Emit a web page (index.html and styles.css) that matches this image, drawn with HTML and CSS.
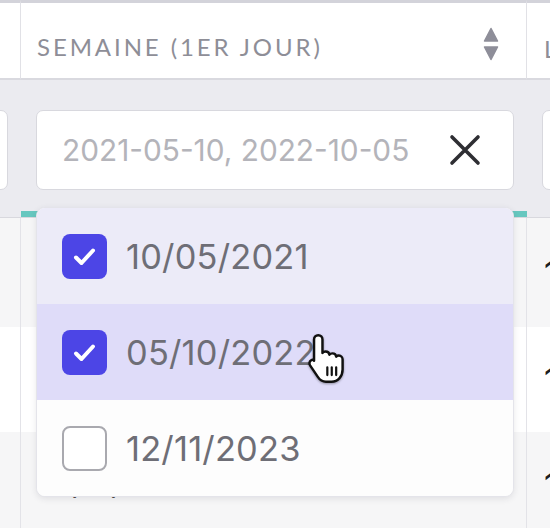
FILE: index.html
```html
<!DOCTYPE html>
<html lang="fr">
<head>
<meta charset="utf-8">
<title>Filtre semaine</title>
<link rel="stylesheet" href="styles.css">
</head>
<body>
<div class="viewport">
  <div class="grid">
    <div class="th c0"></div>
    <div class="th c1">
      <span class="th-label">Semaine (1er jour)</span>
      <svg class="sort" width="16" height="34" viewBox="0 0 16 34"><path d="M8 1.5 L14.5 14 H1.5 Z" fill="#8e8e99" stroke="#8e8e99" stroke-width="1.5" stroke-linejoin="round"/><path d="M8 32.5 L14.5 20 H1.5 Z" fill="#8e8e99" stroke="#8e8e99" stroke-width="1.5" stroke-linejoin="round"/></svg>
    </div>
    <div class="th c2"><span class="th-label">Libellé</span></div>

    <div class="tf c0"><div class="input-box input-stub"></div></div>
    <div class="tf c1">
      <div class="input-box main-input">
        <span class="input-text">2021-05-10, 2022-10-05</span>
        <svg class="clear" width="32" height="32" viewBox="0 0 32 32"><path d="M3 3 L29 29 M29 3 L3 29" stroke="#2e2e33" stroke-width="3.6" stroke-linecap="round"/></svg>
      </div>
      <div class="spacer"></div>
      <div class="focus-bar"></div>
      <div class="dropdown">
        <div class="option selected">
          <span class="checkbox checked"><svg width="45" height="45" viewBox="0 0 45 45"><path d="M14 23.5 L19.5 29 L31 16.5" fill="none" stroke="#fff" stroke-width="4" stroke-linecap="round" stroke-linejoin="round"/></svg></span>
          <span class="opt-label">10/05/2021</span>
        </div>
        <div class="option hover">
          <span class="checkbox checked"><svg width="45" height="45" viewBox="0 0 45 45"><path d="M14 23.5 L19.5 29 L31 16.5" fill="none" stroke="#fff" stroke-width="4" stroke-linecap="round" stroke-linejoin="round"/></svg></span>
          <span class="opt-label">05/10/2022</span>
          <svg class="cursor" width="40" height="52" viewBox="0 0 18 23.5"><path d="M3.6 2.9 C3.6 1.8 4.4 1 5.5 1 C6.6 1 7.4 1.8 7.4 2.9 L7.4 9 C7.7 8.6 8.2 8.4 8.8 8.4 C9.7 8.4 10.4 9 10.5 9.8 C10.8 9.4 11.3 9.2 11.9 9.2 C12.8 9.2 13.5 9.9 13.6 10.7 C13.9 10.4 14.3 10.2 14.8 10.2 C15.8 10.2 16.5 11 16.5 12 L16.5 16.5 C16.5 19.5 14.5 22 11.5 22 L9 22 C7.2 22 6.2 21.2 5.3 19.8 L1.8 14.6 C1.3 13.8 1.5 12.8 2.3 12.3 C2.9 11.9 3.3 12.1 3.6 12.5 Z" fill="#fff" stroke="#111" stroke-width="1.1" stroke-linejoin="round"/><path d="M9.6 15.5 V19 M11.6 15.5 V19 M13.6 15.5 V19" stroke="#111" stroke-width="1" stroke-linecap="round"/></svg>
        </div>
        <div class="option">
          <span class="checkbox"></span>
          <span class="opt-label">12/11/2023</span>
        </div>
      </div>
    </div>
    <div class="tf c2"><div class="input-box input-stub"></div></div>

    <div class="td c0 grey"></div>
    <div class="td c1 grey"><span class="cell-text">10/05/2021</span></div>
    <div class="td c2 grey"><span class="cell-text">128</span></div>

    <div class="td c0"></div>
    <div class="td c1"><span class="cell-text">05/10/2022</span></div>
    <div class="td c2"><span class="cell-text">134</span></div>

    <div class="td c0 grey"></div>
    <div class="td c1 grey"><span class="cell-text">12/11/2023</span></div>
    <div class="td c2 grey"><span class="cell-text">142</span></div>
  </div>
</div>
</body>
</html>
```

FILE: styles.css
```css
html, body {
  margin: 0;
  padding: 0;
  background: #ffffff;
}

.viewport {
  width: 550px;
  height: 528px;
  overflow: hidden;
}

.grid {
  display: grid;
  grid-template-columns: 21px 506px 240px;
  grid-template-rows: 80px 138px 109px 105px 105px;
  font-family: "Inter", "Liberation Sans", sans-serif;
}

/* Header */
.th {
  box-sizing: border-box;
  background: #ffffff;
  border-top: 3px solid #d3d3da;
  border-bottom: 2px solid #d9d9df;
  display: flex;
  align-items: center;
  padding-top: 15px;
  white-space: nowrap;
  overflow: hidden;
}

.th.c0, .th.c1 {
  border-right: 1px solid #e1e1e6;
}

.th.c1 {
  justify-content: space-between;
  padding-left: 16px;
  padding-right: 27px;
  padding-top: 12px;
}

.th.c2 {
  padding-left: 17px;
}

.th-label {
  font-family: "Lato", "Liberation Sans", sans-serif;
  font-size: 24px;
  letter-spacing: 2.9px;
  text-transform: uppercase;
  color: #8e8e97;
}

.sort {
  display: block;
  margin-top: -6px;
}

/* Filter row */
.tf {
  box-sizing: border-box;
  background: #ebebf0;
  border-bottom: 1px solid #d8d8de;
  padding-top: 30px;
  overflow: hidden;
}

.tf.c0 {
  display: flex;
  justify-content: flex-end;
  padding-right: 13px;
}

.tf.c1 {
  position: relative;
  overflow: visible;
  display: flex;
  flex-direction: column;
  z-index: 2;
}

.tf.c2 {
  padding-left: 15px;
}

.input-box {
  box-sizing: border-box;
  height: 80px;
  background: #ffffff;
  border: 1px solid #d8d8de;
  border-radius: 7px;
}

.input-stub {
  width: 120px;
  flex-shrink: 0;
}

.main-input {
  margin: 0 13px 0 15px;
  display: flex;
  align-items: center;
  justify-content: space-between;
  padding: 0 32px 0 25px;
}

.input-text {
  font-size: 29.8px;
  color: #b4b4ba;
  white-space: nowrap;
}

.clear {
  display: block;
}

.spacer {
  flex: 1;
}

.focus-bar {
  height: 6px;
  background: #66c7bf;
}

/* Dropdown */
.dropdown {
  position: absolute;
  top: 127px;
  left: 15px;
  width: 478px;
  box-sizing: border-box;
  border: 1px solid #e4e4ea;
  border-radius: 9px;
  overflow: hidden;
  background: #fdfdfd;
  box-shadow: 0 2px 6px rgba(40, 40, 60, 0.10);
}

.option {
  position: relative;
  height: 96px;
  display: flex;
  align-items: center;
  padding-left: 25px;
  gap: 19px;
  background: #fdfdfd;
}

.option.selected {
  background: #ecebf8;
}

.option.hover {
  background: #dfdcf9;
}

.checkbox {
  box-sizing: border-box;
  width: 45px;
  height: 45px;
  border-radius: 8px;
  border: 2px solid #a9a9af;
  background: #ffffff;
  flex-shrink: 0;
}

.checkbox.checked {
  border: none;
  background: #4c45e6;
}

.checkbox svg {
  display: block;
}

.opt-label {
  font-size: 34.4px;
  color: #6e6e76;
  letter-spacing: 0.2px;
}

.cursor {
  position: absolute;
  left: 269px;
  top: 29px;
  filter: drop-shadow(0 1px 1px rgba(0,0,0,0.35));
}

/* Body rows */
.td {
  box-sizing: border-box;
  background: #ffffff;
  display: flex;
  align-items: center;
  padding-left: 16px;
  white-space: nowrap;
  overflow: hidden;
}

.td.grey {
  background: #f6f6f7;
}

.td.c0, .td.c1 {
  border-right: 1px solid #e3e3e8;
}

.td.c0 {
  padding-left: 0;
}

.td.c1 {
  padding-left: 18px;
  padding-bottom: 6px;
}

.td.c2 {
  padding-left: 17px;
}

.cell-text {
  font-size: 33px;
  color: #1d1d22;
}
```
